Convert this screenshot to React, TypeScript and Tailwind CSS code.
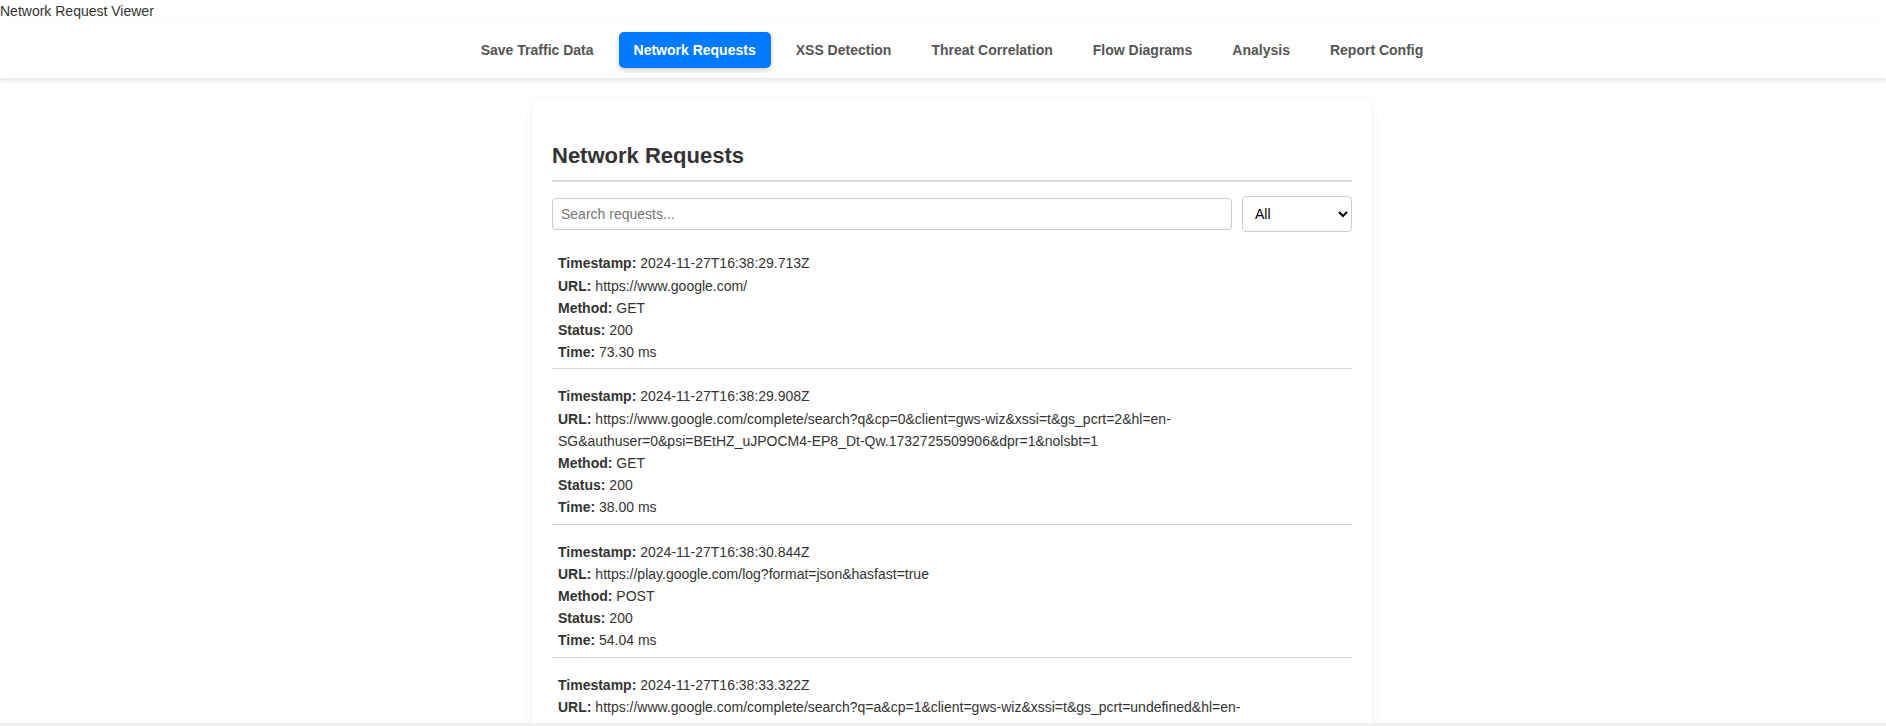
import React from "react";

interface RequestEntry {
  timestamp: string;
  url: string;
  method: string;
  status: number;
  time: string;
}

const tabs = [
  "Save Traffic Data",
  "Network Requests",
  "XSS Detection",
  "Threat Correlation",
  "Flow Diagrams",
  "Analysis",
  "Report Config",
];

const requests: RequestEntry[] = [
  {
    timestamp: "2024-11-27T16:38:29.713Z",
    url: "https://www.google.com/",
    method: "GET",
    status: 200,
    time: "73.30 ms",
  },
  {
    timestamp: "2024-11-27T16:38:29.908Z",
    url: "https://www.google.com/complete/search?q&cp=0&client=gws-wiz&xssi=t&gs_pcrt=2&hl=en-SG&authuser=0&psi=BEtHZ_uJPOCM4-EP8_Dt-Qw.1732725509906&dpr=1&nolsbt=1",
    method: "GET",
    status: 200,
    time: "38.00 ms",
  },
  {
    timestamp: "2024-11-27T16:38:30.844Z",
    url: "https://play.google.com/log?format=json&hasfast=true",
    method: "POST",
    status: 200,
    time: "54.04 ms",
  },
  {
    timestamp: "2024-11-27T16:38:33.322Z",
    url: "https://www.google.com/complete/search?q=a&cp=1&client=gws-wiz&xssi=t&gs_pcrt=undefined&hl=en-SG&authuser=0&psi=BEtHZ_uJPOCM4-EP8_Dt-Qw.1732725509906&dpr=1",
    method: "GET",
    status: 200,
    time: "41.27 ms",
  },
  {
    timestamp: "2024-11-27T16:38:34.016Z",
    url: "https://www.google.com/gen_204?atyp=i&ei=BEtHZ_uJPOCM4-EP8_Dt-Qw",
    method: "POST",
    status: 204,
    time: "29.85 ms",
  },
];

function Field({ label, value }: { label: string; value: React.ReactNode }) {
  return (
    <div>
      <span className="font-bold">{label}:</span> {value}
    </div>
  );
}

export default function App() {
  return (
    <div className="flex h-screen flex-col overflow-hidden bg-white font-['Liberation_Sans',Arial,sans-serif] text-[14px] leading-[22.4px] text-[#333]">
      <div className="min-h-0 flex-1 overflow-hidden">
        <div>Network Request Viewer</div>

        <nav className="flex justify-center gap-[10px] bg-white py-[10px] pl-[18px] shadow-[0_2px_5px_rgba(0,0,0,0.12)]">
          {tabs.map((tab) => {
            const active = tab === "Network Requests";
            return (
              <button
                key={tab}
                className={
                  active
                    ? "h-[36px] rounded-[5px] bg-[#007bff] px-[15px] font-bold text-white shadow-[0_2px_5px_rgba(0,0,0,0.2)]"
                    : "h-[36px] rounded-[5px] px-[15px] font-bold text-[#555]"
                }
              >
                {tab}
              </button>
            );
          })}
        </nav>

        <main className="mt-[22px] flex justify-center pl-[18px]">
          <section className="w-[840px] rounded-[8px] bg-white px-[20px] pt-[20px] shadow-[0_2px_10px_rgba(0,0,0,0.08)]">
            <h2 className="mt-[23px] border-b-2 border-[#ddd] pb-[11px] text-[22px] font-bold leading-[26px] text-[#333]">
              Network Requests
            </h2>

            <div className="mt-[14px] flex items-center gap-[10px]">
              <input
                type="text"
                placeholder="Search requests..."
                className="h-[32px] flex-1 rounded-[4px] border border-[#ccc] px-[8px] text-[14px] text-[#333] placeholder:text-[#757575] outline-none"
              />
              <select
                defaultValue="All"
                className="h-[36px] w-[110px] rounded-[4px] border border-[#ccc] px-[8px] text-[14px] text-black"
              >
                <option>All</option>
                <option>GET</option>
                <option>POST</option>
              </select>
            </div>

            <div className="mt-[15px] flex flex-col gap-[11px] leading-[22.2px]">
              {requests.map((r) => (
                <div
                  key={r.timestamp}
                  className="border-b border-[#d6d6d6] px-[6px] py-[5px]"
                >
                  <Field label="Timestamp" value={r.timestamp} />
                  <Field label="URL" value={r.url} />
                  <Field label="Method" value={r.method} />
                  <Field label="Status" value={r.status} />
                  <Field label="Time" value={r.time} />
                </div>
              ))}
            </div>
          </section>
        </main>
      </div>
      <div className="h-[3px] shrink-0 bg-[#f0f0f0]" />
    </div>
  );
}
